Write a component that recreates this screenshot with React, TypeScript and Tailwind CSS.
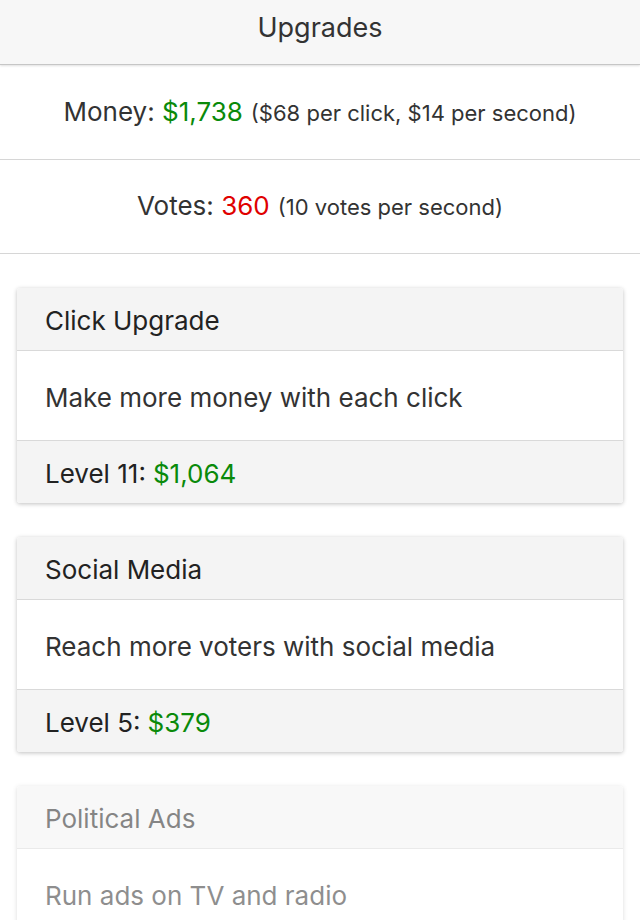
const font = { fontFamily: "Inter, 'Liberation Sans', sans-serif" };

type Upgrade = {
  title: string;
  desc: string;
  level?: number;
  cost?: string;
  locked?: boolean;
};

const upgrades: Upgrade[] = [
  { title: "Click Upgrade", desc: "Make more money with each click", level: 11, cost: "$1,064" },
  { title: "Social Media", desc: "Reach more voters with social media", level: 5, cost: "$379" },
  { title: "Political Ads", desc: "Run ads on TV and radio", locked: true },
];

function UpgradeCard({ u }: { u: Upgrade }) {
  return (
    <div
      className={`mx-[17px] mb-[34px] rounded-[3px] bg-white shadow-[0_1px_4px_rgba(0,0,0,0.25)] ${u.locked ? "opacity-55" : ""}`}
    >
      <div className="h-[63px] flex items-center px-[28px] pt-[3px] bg-[#f4f4f4] border-b border-[#d9d9d9] rounded-t-[3px] text-[26px] text-[#222]">
        {u.title}
      </div>
      <div className="h-[90px] flex items-center px-[28px] pt-[3px] border-b border-[#d9d9d9] text-[26px] text-[#333]">
        {u.desc}
      </div>
      <div className="h-[62px] flex items-center px-[28px] pt-[3px] bg-[#f4f4f4] rounded-b-[3px] text-[26px] text-[#222]">
        Level {u.level}: <span className="ml-[7px] text-[#0a8a0a]">{u.cost}</span>
      </div>
    </div>
  );
}

export default function App() {
  return (
    <div className="w-[640px] h-[920px] overflow-hidden bg-white" style={font}>
      <div className="h-[65px] flex items-center justify-center pb-[7px] bg-[#f7f7f7] border-b border-[#c6c6c6] shadow-[0_1px_2px_rgba(0,0,0,0.12)] text-[27px] text-[#333]">
        Upgrades
      </div>

      <div className="h-[95px] flex items-baseline justify-center pt-[27px] border-b border-[#d6d6d6] text-[#333]">
        <span className="text-[26px]">Money: <span className="text-[#0a8a0a]">$1,738</span></span>
        <span className="ml-[8px] text-[22px]">($68 per click, $14 per second)</span>
      </div>

      <div className="h-[94px] flex items-baseline justify-center pt-[26px] border-b border-[#d6d6d6] text-[#333]">
        <span className="text-[26px]">Votes: <span className="text-[#e00000]">360</span></span>
        <span className="ml-[8px] text-[22px]">(10 votes per second)</span>
      </div>

      <div className="pt-[34px]">
        {upgrades.map((u) => (
          <UpgradeCard key={u.title} u={u} />
        ))}
      </div>
    </div>
  );
}
